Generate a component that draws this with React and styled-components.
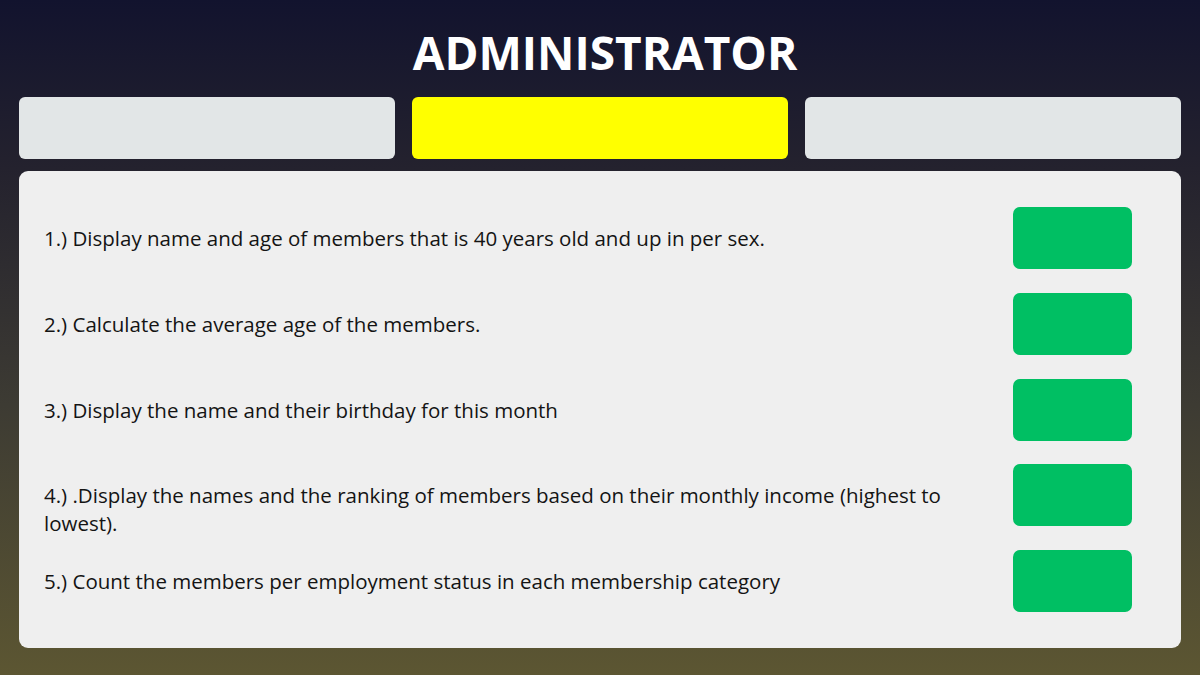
import React from 'react';
import styled, { createGlobalStyle } from 'styled-components';

const GlobalStyle = createGlobalStyle`
  html, body {
    margin: 0;
    padding: 0;
  }
  body {
    font-family: "Open Sans", "Noto Sans", sans-serif;
  }
`;

const Page = styled.div`
  width: 1200px;
  height: 675px;
  box-sizing: border-box;
  padding: 22px 19px 0;
  background: linear-gradient(180deg, #12132e 0%, #24222e 25%, #3d3b33 60%, #5c5632 100%);
  display: flex;
  flex-direction: column;
`;

const Title = styled.h1`
  margin: 0;
  height: 63px;
  padding-left: 10px;
  text-align: center;
  color: #ffffff;
  font-size: 46px;
  font-weight: 700;
  line-height: 60px;
`;

const Tabs = styled.div`
  display: grid;
  grid-template-columns: repeat(3, 1fr);
  gap: 17px;
  margin-top: 12px;
`;

const Tab = styled.div`
  height: 62px;
  border-radius: 6px;
  background: ${(p) => (p.$active ? '#ffff00' : '#e2e6e7')};
`;

const Panel = styled.div`
  margin-top: 12px;
  height: 477px;
  box-sizing: border-box;
  border-radius: 9px;
  background: #efefef;
  padding: 36px 49px 0 25px;
  display: flex;
  flex-direction: column;
  gap: 23.75px;
`;

const Row = styled.div`
  display: flex;
  justify-content: space-between;
  align-items: flex-start;
  height: 62px;
`;

const Question = styled.p`
  margin: 17px 0 0;
  max-width: 920px;
  font-size: 20.5px;
  line-height: 28px;
  color: #141414;
`;

const GoButton = styled.button`
  flex: none;
  width: 119px;
  height: 62px;
  border: none;
  border-radius: 7px;
  background: #00bf63;
  cursor: pointer;
`;

const questions = [
  '1.) Display name and age of members that is 40 years old and up in per sex.',
  '2.) Calculate the average age of the members.',
  '3.) Display the name and their birthday for this month',
  '4.) .Display the names and the ranking of members based on their monthly income (highest to lowest).',
  '5.) Count the members per employment status in each membership category',
];

const App = () => {
  return (
    <>
      <GlobalStyle />
      <Page>
        <Title>ADMINISTRATOR</Title>
        <Tabs>
          <Tab />
          <Tab $active />
          <Tab />
        </Tabs>
        <Panel>
          {questions.map((q) => (
            <Row key={q}>
              <Question>{q}</Question>
              <GoButton />
            </Row>
          ))}
        </Panel>
      </Page>
    </>
  );
};

export default App;
